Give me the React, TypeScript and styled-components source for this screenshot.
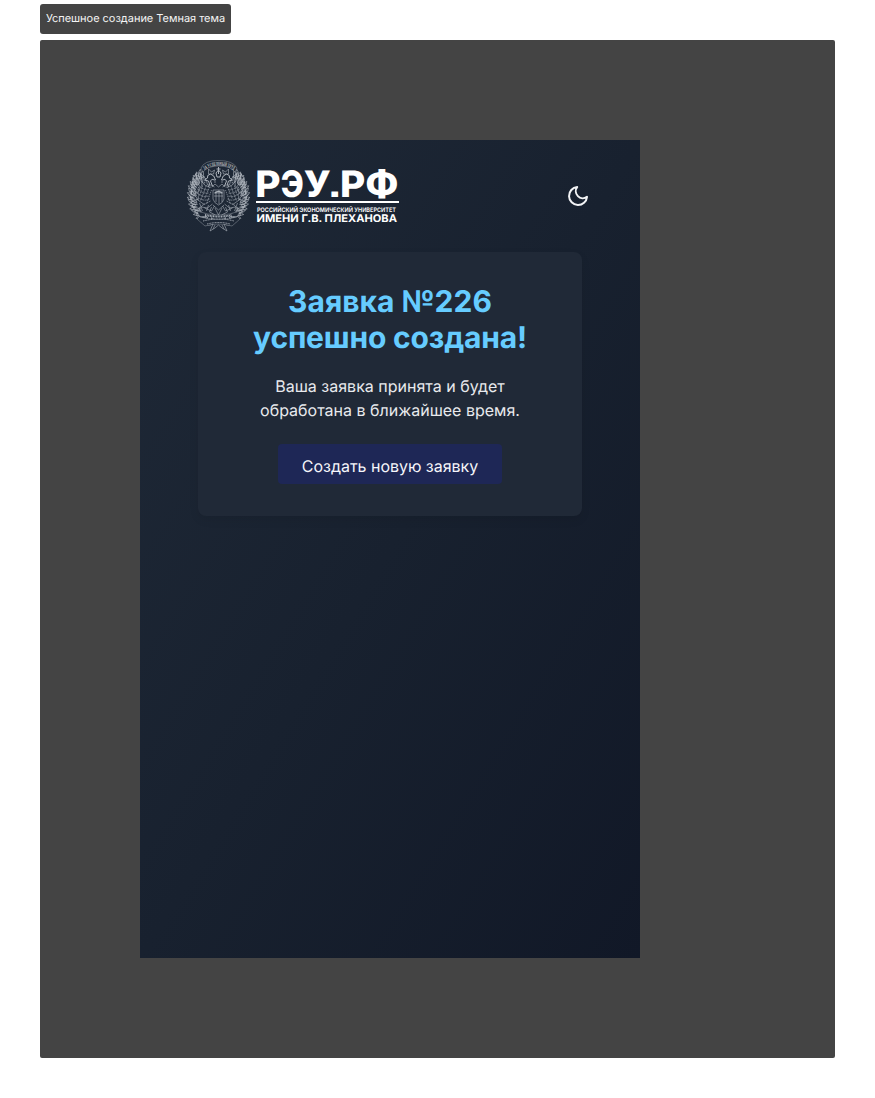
import React from "react";
import styled, { createGlobalStyle } from "styled-components";

const GlobalStyle = createGlobalStyle`
  * { box-sizing: border-box; }
  body {
    margin: 0;
    background: #fff;
    font-family: Inter, "Liberation Sans", sans-serif;
    text-rendering: geometricPrecision;
  }
`;

const Board = styled.div`
  width: 875px;
  height: 1098px;
  padding: 4px 40px 40px;
  display: flex;
  flex-direction: column;
  align-items: flex-start;
  gap: 6px;
`;

const SectionLabel = styled.div`
  width: 191px;
  height: 30px;
  display: flex;
  align-items: center;
  justify-content: center;
  padding-bottom: 2px;
  border-radius: 3px;
  background: #444;
  color: #f4f4f4;
  font-size: 11px;
  letter-spacing: -0.02px;
  white-space: nowrap;
`;

const Section = styled.section`
  width: 795px;
  height: 1018px;
  padding: 100px;
  border-radius: 2px;
  background: #444;
`;

const Screen = styled.main`
  width: 500px;
  height: 818px;
  padding: 16px 40px;
  display: flex;
  flex-direction: column;
  align-items: center;
  background: linear-gradient(to bottom right, #1f2937, #18212f 50%, #111827);
`;

const Header = styled.header`
  width: 100%;
  height: 80px;
  display: flex;
  align-items: center;
  justify-content: space-between;
`;

const Logo = styled.svg`
  display: block;
  width: 226px;
  height: 80px;
`;

const ThemeButton = styled.button`
  width: 44px;
  height: 44px;
  padding: 0;
  border: 0;
  display: flex;
  align-items: center;
  justify-content: center;
  background: none;
  color: #f3f4f6;
`;

const Card = styled.section`
  width: 384px;
  height: 264px;
  margin-top: 16px;
  padding: 32px;
  display: flex;
  flex-direction: column;
  align-items: center;
  border-radius: 8px;
  background: #202937;
  box-shadow: 0 4px 10px rgba(0, 0, 0, 0.08);
`;

const Title = styled.h1`
  margin: 0;
  color: #66ccff;
  font-size: 30px;
  font-weight: 700;
  line-height: 36px;
  text-align: center;
  white-space: nowrap;
`;

const TitleEnd = styled.span`
  letter-spacing: -0.18px;
`;

const Message = styled.p`
  margin: 18px 0 0;
  color: #e8eaed;
  font-size: 16px;
  line-height: 24px;
  text-align: center;
  white-space: nowrap;
`;

const ActionButton = styled.button`
  width: 224px;
  height: 40px;
  margin-top: 22px;
  padding: 3px 0 0;
  border: 0;
  border-radius: 4px;
  background: #1e2756;
  color: #f6f6fa;
  font: 400 16px/24px Inter, sans-serif;
  letter-spacing: -0.03px;
  text-rendering: geometricPrecision;
  white-space: nowrap;
`;

const leaves = Array.from({ length: 19 }, (_, i) => {
  const turn = -48 + i * 6.8;
  const angle = (turn * Math.PI) / 180;
  return { x: 27.5 * Math.cos(angle), y: 29 * Math.sin(angle), turn };
});

function WreathHalf({ flip = false }: { flip?: boolean }) {
  return (
    <g transform={`translate(38.5 39) scale(${flip ? -1 : 1} 1)`}>
      {leaves.map((leaf, i) => (
        <g key={leaf.turn} transform={`translate(${leaf.x} ${leaf.y}) rotate(${leaf.turn + (i % 3) * 14})`}>
          <path d="M-5 1Q-3-3 0-4Q0-1-3 2M-2 1Q1-3 3-3Q3 0-1 3M-6-1L0 0" />
        </g>
      ))}
      <path d="M22-22Q28-12 27-1M28 1Q27 12 21 19" strokeWidth="1.1" strokeDasharray="4 2 1 2" />
    </g>
  );
}

function EagleHalf({ flip = false }: { flip?: boolean }) {
  return (
    <g transform={`translate(38.5 0) scale(${flip ? -1 : 1} 1)`}>
      <path d="M3 24Q4 19 8 18Q12 19 11 22L14 24L10 25Q8 28 10 31M4 24Q7 22 8 25L6 30" strokeWidth="1" />
      <path d="M4 31Q7 28 11 29Q11 25 15 20L16 27L18 18L19 27L22 19L22 29L25 23L23 34L26 29L22 40L25 38L20 44L22 43L15 48" />
      <path d="M7 31Q13 32 18 24M10 34Q17 34 21 27M10 37Q17 38 23 31M10 40Q16 42 23 36M9 43Q15 46 21 41M8 45L15 49M12 29L18 45M14 26L22 38" strokeDasharray="2.2 .6" />
      <path d="M13 22L14 29M17 21L17 30M20 23L19 33M9 31L14 43M7 34L12 48M16 30L19 40M20 31L20 43" strokeDasharray="1.4 .7" />
      <path d="M6 48L11 52L17 51M10 49L12 55M14 47L20 54M7 51L9 56L3 59M4 50L7 55L14 52M19 47L16 55" />
      <path d="M5 18L4 14L7 16L10 13L10 18Z" />
    </g>
  );
}

function Emblem() {
  return (
    <g fill="none" stroke="#e8edf3" strokeWidth="0.6" opacity="0.7">
      <WreathHalf />
      <WreathHalf flip />
      <EagleHalf />
      <EagleHalf flip />
      <path d="M21 12Q24 4.5 38.5 4.5Q53 4.5 57 12L55 16Q51 10 38.5 10Q28 10 23 16Z" fill="#1d2735" strokeWidth="0.4" />
      <path id="motto" d="M24.5 14Q38.5 5 54 14" stroke="none" />
      <text fill="#fff" stroke="none" fontFamily="Liberation Serif" fontSize="5.4" fontWeight="700">
        <textPath href="#motto" textLength="31" lengthAdjust="spacingAndGlyphs">ЗА УСПЕШНЫЙ ТРУД</textPath>
      </text>
      <path d="M38.5 11V18M36.5 13H40.5M36 17L38.5 14L41 17L40 21H37Z" strokeWidth="1" />
      <path d="M33 34H44V43Q43 47 38.5 49Q34 47 33 43ZM34 37H43M34 40H43M36 35V46M39 34V48M42 35V46" />
      <path d="M35 37Q38.5 34 42 37" strokeWidth="1.5" />
      <path d="M32 31L35 28L38.5 31L42 28L45 31M35 27V23M42 27V23M33 49L38.5 54L44 49M35 52L38.5 59L42 52" />
      <path d="M17 55Q39 63 60 55L57 61Q39 66 20 61ZM20 60L17 63L25 70Q38 66 52 70L60 63L57 60" fill="#1d2735" strokeWidth="0.4" />
      <path d="M25 59Q39 62 52 59" strokeWidth="2" strokeDasharray="1 .6" />
      <path d="M23 65Q39 61 54 65M27 68Q39 65 50 68" strokeWidth="1" strokeDasharray="1 .6" />
      <path d="M33 68L30 75L35 72L38.5 69L42 72L47 75L44 68M35 69L33 73M42 69L44 73" />
    </g>
  );
}

const wordmark = [
  { char: "Р", x: 75.2, width: 25.3 },
  { char: "Э", x: 100.8, width: 23 },
  { char: "У", x: 123.8, width: 27 },
  { char: ".", x: 148.2, width: 13 },
  { char: "Р", x: 160, width: 25.3 },
  { char: "Ф", x: 185.3, width: 33.2 },
];

function UniversityLogo() {
  return (
    <Logo viewBox="0 0 226 80" role="img" aria-label="РЭУ.РФ">
      <Emblem />
      <g fill="#fff" fontFamily="Inter">
        <text y="41" fontSize="36.5" fontWeight="800">
          {wordmark.map((letter) => (
            <tspan
              key={letter.x}
              x={letter.x}
              textLength={letter.width}
              lengthAdjust="spacingAndGlyphs"
              fontFamily={letter.char === "." ? "Liberation Sans" : "Inter"}
            >
              {letter.char}
            </tspan>
          ))}
        </text>
        <rect x="76" y="45" width="143" height="2" />
        <text x="77" y="55.9" fontSize="6.2" fontWeight="600" textLength="139" lengthAdjust="spacingAndGlyphs">РОССИЙСКИЙ ЭКОНОМИЧЕСКИЙ УНИВЕРСИТЕТ</text>
        <text x="76.5" y="65.8" fontSize="10.5" fontWeight="700" textLength="140.5" lengthAdjust="spacingAndGlyphs">ИМЕНИ Г.В. ПЛЕХАНОВА</text>
      </g>
    </Logo>
  );
}

function MoonIcon() {
  return (
    <svg width="24" height="24" viewBox="0 0 24 24" fill="none" stroke="currentColor" strokeWidth="2" strokeLinecap="round" strokeLinejoin="round">
      <path d="M21 12.79A9 9 0 1 1 11.21 3 7 7 0 0 0 21 12.79z" />
    </svg>
  );
}

export default function App() {
  return (
    <>
      <GlobalStyle />
      <Board>
        <SectionLabel>Успешное создание Темная тема</SectionLabel>
        <Section>
          <Screen>
            <Header>
              <UniversityLogo />
              <ThemeButton aria-label="Сменить тему"><MoonIcon /></ThemeButton>
            </Header>
            <Card>
              <Title>Заявка №226<br /><TitleEnd>успешно создана!</TitleEnd></Title>
              <Message>Ваша заявка принята и будет<br />обработана в ближайшее время.</Message>
              <ActionButton>Создать новую заявку</ActionButton>
            </Card>
          </Screen>
        </Section>
      </Board>
    </>
  );
}
